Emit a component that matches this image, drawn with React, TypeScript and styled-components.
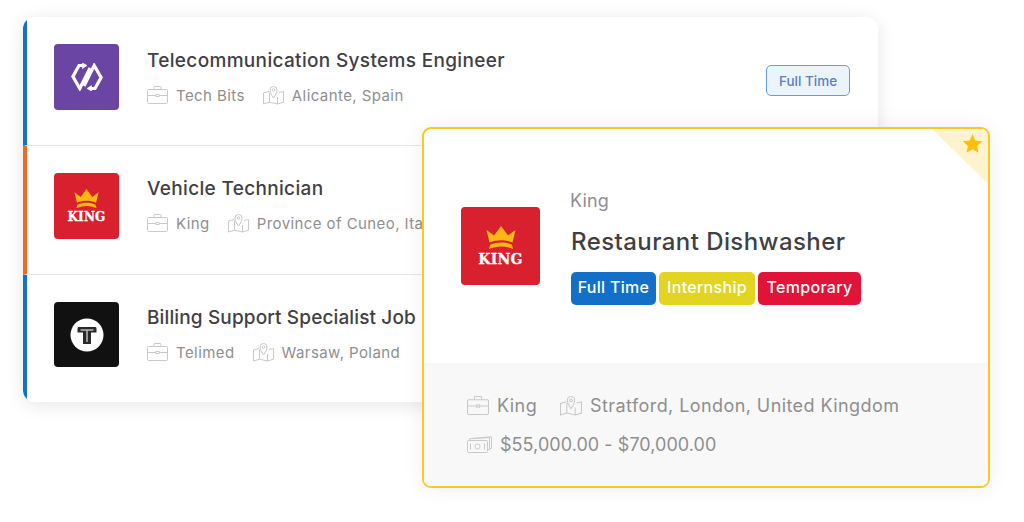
import React from "react";
import styled, { createGlobalStyle } from "styled-components";

const Global = createGlobalStyle`
  html, body { margin: 0; padding: 0; background: #fff; }
  body { font-family: Inter, "Noto Sans", "Liberation Sans", sans-serif; overflow: hidden; }
  * { box-sizing: border-box; }
`;

const Page = styled.div`
  position: relative;
  width: 1024px;
  height: 522px;
  padding: 17px 0 0 23px;
  background: #fff;
`;

const List = styled.div`
  width: 855px;
  height: 385px;
  background: #fff;
  border-radius: 12px;
  overflow: hidden;
  box-shadow: 0 3px 18px rgba(0, 0, 0, 0.1);
  display: flex;
  flex-direction: column;
`;

const Row = styled.div<{ $accent: string; $h: number; $last?: boolean }>`
  height: ${(p) => p.$h}px;
  flex: none;
  display: flex;
  align-items: flex-start;
  gap: 28px;
  padding: 27px 28px 0 27px;
  border-left: 4px solid ${(p) => p.$accent};
  border-bottom: ${(p) => (p.$last ? "none" : "1px solid #e6e6e6")};
`;

const LogoTile = styled.div<{ $bg: string; $w: number; $h: number }>`
  width: ${(p) => p.$w}px;
  height: ${(p) => p.$h}px;
  flex: none;
  background: ${(p) => p.$bg};
  border-radius: 4px;
  display: flex;
  flex-direction: column;
  align-items: center;
  justify-content: center;
`;

const KingWord = styled.span<{ $size: number }>`
  font-family: "DejaVu Serif", "Liberation Serif", serif;
  font-weight: 700;
  font-size: ${(p) => p.$size}px;
  line-height: 1;
  color: #fff;
  letter-spacing: 0.2px;
  margin-top: 3px;
  -webkit-text-stroke: 0.3px #fff;
`;

const RowBody = styled.div<{ $top: number }>`
  flex: 1;
  min-width: 0;
  display: flex;
  flex-direction: column;
  gap: 10px;
  padding-top: ${(p) => p.$top}px;
`;

const RowTitle = styled.div<{ $ls: number }>`
  font-size: 19px;
  line-height: 26px;
  font-weight: 500;
  color: #3f3f46;
  letter-spacing: ${(p) => p.$ls}px;
  white-space: nowrap;
`;

const Meta = styled.div`
  display: flex;
  align-items: center;
  gap: 18px;
  height: 22px;
`;

const MetaItem = styled.span<{ $large?: boolean; $tight?: boolean }>`
  display: inline-flex;
  align-items: center;
  gap: 8px;
  font-size: ${(p) => (p.$large ? 18 : 15)}px;
  color: #8f8f8f;
  white-space: nowrap;
  letter-spacing: ${(p) => (p.$tight ? 0.05 : p.$large ? 0.42 : 0.42)}px;
`;

const OutlineTag = styled.span`
  margin-top: 21px;
  flex: none;
  width: 84px;
  height: 31px;
  display: flex;
  align-items: center;
  justify-content: center;
  border: 1px solid #5f9fde;
  border-radius: 5px;
  background: #ebf3fb;
  color: #5c7fc0;
  font-size: 13.5px;
  font-weight: 500;
`;

const Featured = styled.div`
  position: absolute;
  left: 422px;
  top: 127px;
  width: 568px;
  height: 361px;
  border: 2px solid #fdc723;
  border-radius: 9px;
  background: #fff;
  overflow: hidden;
  display: flex;
  flex-direction: column;
  box-shadow: 0 0 22px rgba(0, 0, 0, 0.07);
`;

const Corner = styled.div`
  position: absolute;
  top: 0;
  right: 0;
  width: 56px;
  height: 55px;
  background: #fff3cd;
  clip-path: polygon(0 0, 100% 0, 100% 100%);
`;

const CornerStar = styled.svg`
  position: absolute;
  top: 4px;
  right: 5px;
  width: 21px;
  height: 21px;
`;

const FeatureTop = styled.div`
  flex: none;
  height: 234px;
  display: flex;
  align-items: flex-start;
  gap: 31px;
  padding: 57px 0 0 37px;
`;

const FeatureLogoWrap = styled.div`
  padding-top: 21px;
`;

const FeatureInfo = styled.div`
  display: flex;
  flex-direction: column;
`;

const Company = styled.div`
  font-size: 18px;
  line-height: 30px;
  color: #8f8f8f;
  letter-spacing: 0.1px;
  margin-left: -1px;
`;

const FeatureTitle = styled.div`
  margin-top: 10px;
  font-size: 24px;
  line-height: 32px;
  font-weight: 500;
  color: #3f3f46;
  letter-spacing: 0.43px;
`;

const Tags = styled.div`
  margin-top: 14px;
  display: flex;
  gap: 3px;
`;

const Tag = styled.span<{ $bg: string; $w: number }>`
  width: ${(p) => p.$w}px;
  height: 33px;
  padding-bottom: 3px;
  display: flex;
  align-items: center;
  justify-content: center;
  border-radius: 5px;
  background: ${(p) => p.$bg};
  color: #fff;
  font-size: 16px;
  font-weight: 500;
  letter-spacing: 0.3px;
`;

const FeatureBottom = styled.div`
  flex: 1;
  background: #f8f8f8;
  padding: 31px 0 0 43px;
  display: flex;
  flex-direction: column;
  gap: 17px;
`;

const FeatureLine = styled.div`
  display: flex;
  align-items: center;
  gap: 23px;
  height: 22px;
`;

const Icon = styled.svg.attrs({ fill: "none", stroke: "#c9c9c9", strokeWidth: 1 })<{ $w: number; $h: number }>`
  width: ${(p) => p.$w}px;
  height: ${(p) => p.$h}px;
  flex: none;
`;

const Briefcase = ({ w = 21, h = 18 }: { w?: number; h?: number }) => (
  <Icon $w={w} $h={h} viewBox="0 0 21 18">
    <rect x="0.5" y="3.5" width="20" height="14" rx="1" />
    <path d="M7 3.5V1.200c0-.4.3-.7.7-.7h5.600c.4 0 .7.3.7.7v2.300M.5 9.500h8.500M12 9.500h8.500" />
    <rect x="9" y="8.500" width="3" height="2" />
  </Icon>
);

const MapPin = ({ w = 21, h = 20 }: { w?: number; h?: number }) => (
  <Icon $w={w} $h={h} viewBox="0 0 21 20">
    <path d="M6 6.500 .5 8v11l6-1.800 8 1.800 6-1.800V6.500L16 7.500M6.500 7.500v9.700M14.500 12v7" />
    <path d="M10.500 13C8.500 10 7 8 7 5a3.500 3.500 0 0 1 7 0c0 3-1.500 5-3.500 8Z" />
    <circle cx="10.500" cy="5" r="1.300" />
  </Icon>
);

const Money = () => (
  <Icon $w={25} $h={17} viewBox="0 0 25 17">
    <rect x="0.5" y="4.500" width="20" height="12" rx="1" />
    <path d="M2.500 4.500V2.800L22.500 1.500V13.500L20.500 13.800M5 2.500 24.500 .8V12.500L22.500 12.800" />
    <circle cx="10.500" cy="10.500" r="2.500" />
    <path d="M3.500 7.500v6M17.500 7.500v6" />
  </Icon>
);

const Crown = ({ w }: { w: number }) => (
  <svg width={w} viewBox="0 0 30 23" style={{ display: "block" }}>
    <path d="M.5 4 8 9.500 15 0 22 9.500 29.500 4 26.500 16.500C19 13.500 11 13.500 3.500 16.500Z" fill="#fdb813" />
    <path d="M3 23C3.500 20.500 3.800 19.500 4.500 18.500C11 15.800 19 15.800 25.500 18.500C26.200 19.500 26.500 20.500 27 23C19 19.500 11 19.500 3 23Z" fill="#fdb813" />
  </svg>
);

const KingLogo = ({ w, h }: { w: number; h: number }) => (
  <LogoTile $bg="#d8202f" $w={w} $h={h}>
    <Crown w={Math.round(w * 0.385)} />
    <KingWord $size={Math.round(w * 0.18)}>KING</KingWord>
  </LogoTile>
);

const TechLogo = () => (
  <LogoTile $bg="#6a45a3" $w={65} $h={66}>
    <svg width="32" height="28" viewBox="0 0 32 28" fill="none" stroke="#fff" strokeWidth="3.200">
      <path d="M13 2.500H8L1.900 13.500 8.800 25.500 19 5" />
      <path d="M19 25.500H24L30.100 14.500 23.200 2.500 13 23" />
      <path d="M11.500 0 16 2.500 11.500 5.500Z" fill="#fff" strokeWidth="0.600" />
      <path d="M20.500 28 16 25.500 20.500 22.500Z" fill="#fff" strokeWidth="0.600" />
    </svg>
  </LogoTile>
);

const TLogo = () => (
  <LogoTile $bg="#111111" $w={65} $h={65}>
    <svg width="34" height="34" viewBox="0 0 34 34">
      <circle cx="17" cy="17" r="16.500" fill="#fff" />
      <path d="M7.500 10.500C7.500 9.500 8 9 9 9H25C26 9 26.500 9.500 26.500 10.500V14.500H21V26H13V14.500H7.500Z" fill="#2a2a2a" />
      <path d="M10.500 12H23.500M17 12.500V24" stroke="#fff" strokeWidth="1" fill="none" />
    </svg>
  </LogoTile>
);

const rows = [
  { h: 129, top: 4, ls: 0.33, accent: "#1470c8", logo: <TechLogo />, title: "Telecommunication Systems Engineer", company: "Tech Bits", place: "Alicante, Spain", tag: true },
  { h: 129, top: 3, ls: 0.33, accent: "#f26a21", logo: <KingLogo w={65} h={66} />, title: "Vehicle Technician", company: "King", place: "Province of Cuneo, Italy" },
  { h: 127, top: 3, ls: 0.13, accent: "#1470c8", logo: <TLogo />, title: "Billing Support Specialist Job", company: "Telimed", place: "Warsaw, Poland", last: true },
];

export default function App() {
  return (
    <Page>
      <Global />
      <List>
        {rows.map((r) => (
          <Row key={r.title} $accent={r.accent} $h={r.h} $last={r.last}>
            {r.logo}
            <RowBody $top={r.top}>
              <RowTitle $ls={r.ls}>{r.title}</RowTitle>
              <Meta>
                <MetaItem><Briefcase />{r.company}</MetaItem>
                <MetaItem><MapPin />{r.place}</MetaItem>
              </Meta>
            </RowBody>
            {r.tag && <OutlineTag>Full Time</OutlineTag>}
          </Row>
        ))}
      </List>
      <Featured>
        <Corner />
        <CornerStar viewBox="0 0 24 24">
          <path d="M12 1.500 15.300 8.500 23 9.500 17.300 14.800 18.800 22.500 12 18.700 5.200 22.500 6.700 14.800 1 9.500 8.700 8.500Z" fill="#fdbf0f" />
        </CornerStar>
        <FeatureTop>
          <FeatureLogoWrap><KingLogo w={79} h={78} /></FeatureLogoWrap>
          <FeatureInfo>
            <Company>King</Company>
            <FeatureTitle>Restaurant Dishwasher</FeatureTitle>
            <Tags>
              <Tag $bg="#1270c9" $w={85}>Full Time</Tag>
              <Tag $bg="#e3d422" $w={96}>Internship</Tag>
              <Tag $bg="#e21338" $w={103}>Temporary</Tag>
            </Tags>
          </FeatureInfo>
        </FeatureTop>
        <FeatureBottom>
          <FeatureLine>
            <MetaItem $large><Briefcase w={22} h={19} />King</MetaItem>
            <MetaItem $large><MapPin w={22} h={21} />Stratford, London, United Kingdom</MetaItem>
          </FeatureLine>
          <FeatureLine>
            <MetaItem $large $tight><Money />$55,000.00 - $70,000.00</MetaItem>
          </FeatureLine>
        </FeatureBottom>
      </Featured>
    </Page>
  );
}
